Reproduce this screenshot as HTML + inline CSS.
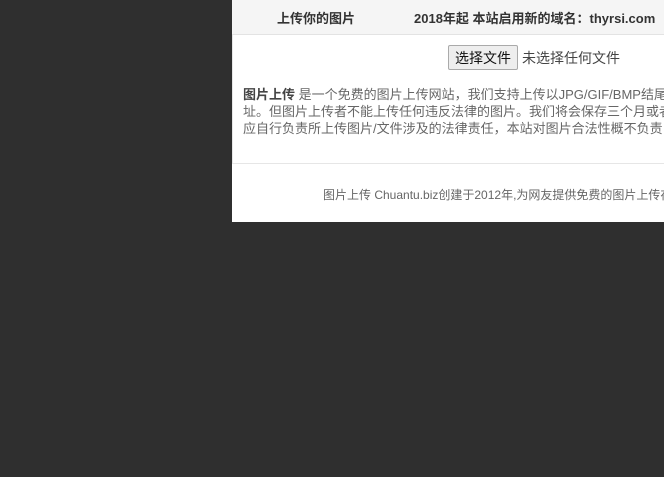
<!DOCTYPE html>
<html><head><meta charset="utf-8"><style>
body{margin:0;width:664px;height:477px;background:#2f2f2f;overflow:hidden;font-family:"Liberation Sans","Noto Sans CJK SC",sans-serif;position:relative}
#p{position:absolute;left:232px;top:0;width:432px;height:222px;background:#fff;overflow:hidden}
.hd{position:absolute;left:0;top:0;width:432px;height:34px;background:#f5f5f5;border-bottom:1px solid #e3e3e3}
.t{position:absolute;white-space:nowrap;font-size:13px}
.box{position:absolute;left:0;top:35px;width:440px;height:128px;border-left:1px solid #e6e6e6;border-bottom:1px solid #e6e6e6}
.btn{position:absolute;left:216px;top:45px;width:68px;height:23px;border:1px solid #aaa;border-radius:2px;background:#eee;font-size:14px;line-height:25px;text-align:center;color:#111;box-sizing:content-box}
</style></head><body>
<div id="p">
<div class="hd"></div>
<div class="t" style="left:45px;top:8px;font-weight:bold;color:#333">上传你的图片</div>
<div class="t" style="left:182px;top:8px;font-weight:bold;color:#333">2018年起 本站启用新的域名：thyrsi.com</div>
<div class="box"></div>
<div class="btn">选择文件</div>
<div class="t" style="left:290px;top:48px;font-size:14px;color:#444">未选择任何文件</div>
<div class="t" style="left:11px;top:86px;color:#666;line-height:17px">
<b style="color:#444">图片上传</b> 是一个免费的图片上传网站，我们支持上传以JPG/GIF/BMP结尾的图片<br>址。但图片上传者不能上传任何违反法律的图片。我们将会保存三个月或者更长<br>应自行负责所上传图片/文件涉及的法律责任，本站对图片合法性概不负责</div>
<div class="t" style="left:91px;top:186px;font-size:12px;color:#666">图片上传 Chuantu.biz创建于2012年,为网友提供免费的图片上传存储服务</div>
</div>
</body></html>
